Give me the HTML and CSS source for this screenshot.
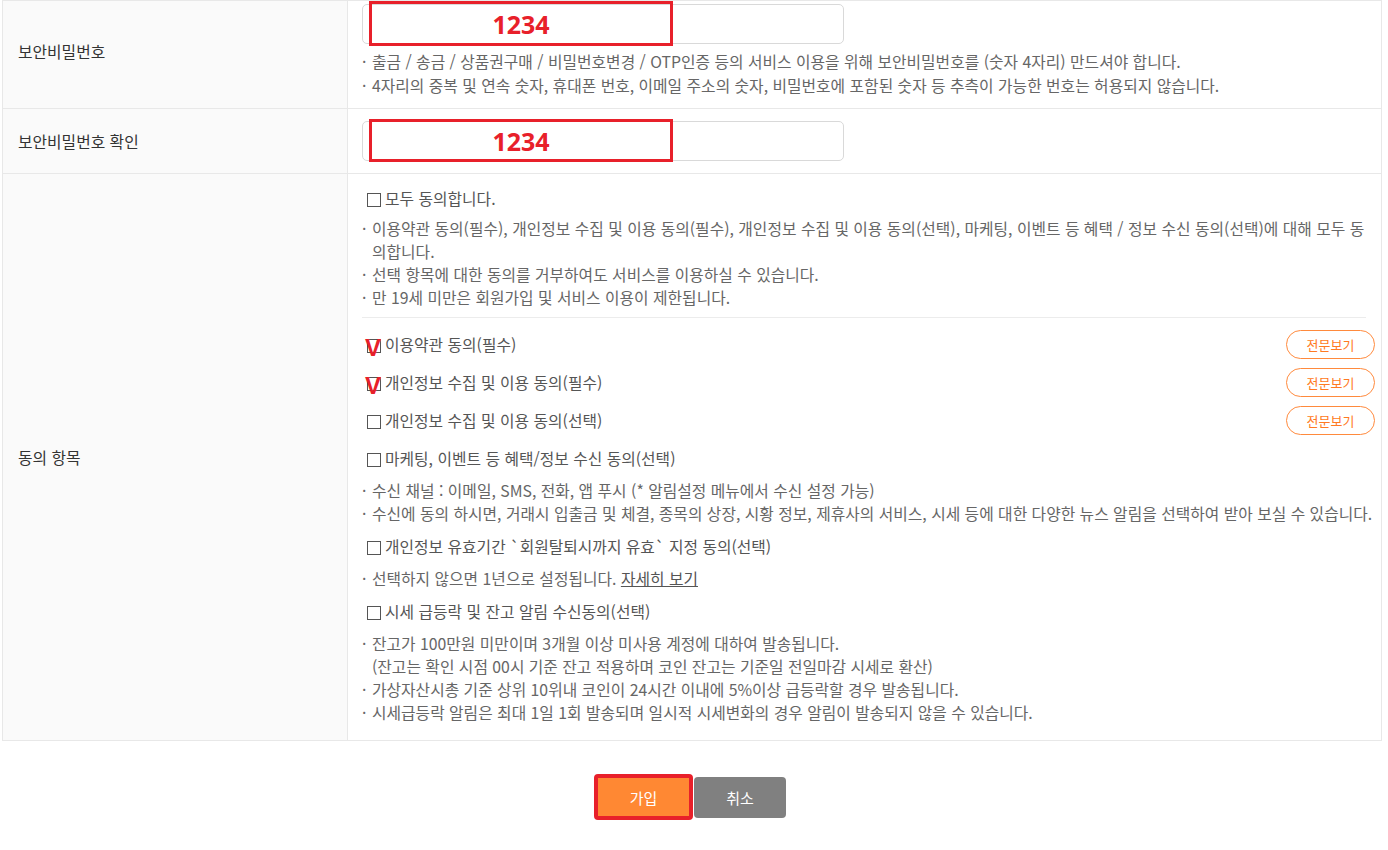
FILE: index.html
```html
<!DOCTYPE html>
<html lang="ko">
<head>
<meta charset="utf-8">
<title>회원가입</title>
<link rel="stylesheet" href="styles.css">
</head>
<body>
<div class="page">
  <div class="form">
    <div class="row row-first">
      <div class="label">보안비밀번호</div>
      <div class="field">
        <div class="input-wrap">
          <div class="input"></div>
          <div class="mark-box">1234</div>
        </div>
        <ul class="hints">
          <li>출금 / 송금 / 상품권구매 / 비밀번호변경 / OTP인증 등의 서비스 이용을 위해 보안비밀번호를 (숫자 4자리) 만드셔야 합니다.</li>
          <li>4자리의 중복 및 연속 숫자, 휴대폰 번호, 이메일 주소의 숫자, 비밀번호에 포함된 숫자 등 추측이 가능한 번호는 허용되지 않습니다.</li>
        </ul>
      </div>
    </div>
    <div class="row">
      <div class="label">보안비밀번호 확인</div>
      <div class="field">
        <div class="input-wrap">
          <div class="input"></div>
          <div class="mark-box mark-box-2">1234</div>
        </div>
      </div>
    </div>
    <div class="row">
      <div class="label">동의 항목</div>
      <div class="field field-agree">
        <div class="check-row check-all"><span class="cb"></span>모두 동의합니다.</div>
        <ul class="hints hints-agree">
          <li>이용약관 동의(필수), 개인정보 수집 및 이용 동의(필수), 개인정보 수집 및 이용 동의(선택), 마케팅, 이벤트 등 혜택 / 정보 수신 동의(선택)에 대해 모두 동<br>의합니다.</li>
          <li>선택 항목에 대한 동의를 거부하여도 서비스를 이용하실 수 있습니다.</li>
          <li>만 19세 미만은 회원가입 및 서비스 이용이 제한됩니다.</li>
        </ul>
        <div class="sep"></div>
        <div class="check-row"><span class="cb cb-checked"><span class="v-mark">V</span></span>이용약관 동의(필수)<button class="view-btn">전문보기</button></div>
        <div class="check-row"><span class="cb cb-checked"><span class="v-mark">V</span></span>개인정보 수집 및 이용 동의(필수)<button class="view-btn">전문보기</button></div>
        <div class="check-row"><span class="cb"></span>개인정보 수집 및 이용 동의(선택)<button class="view-btn">전문보기</button></div>
        <div class="check-row"><span class="cb"></span>마케팅, 이벤트 등 혜택/정보 수신 동의(선택)</div>
        <ul class="hints hints-sub">
          <li>수신 채널 : 이메일, SMS, 전화, 앱 푸시 (* 알림설정 메뉴에서 수신 설정 가능)</li>
          <li>수신에 동의 하시면, 거래시 입출금 및 체결, 종목의 상장, 시황 정보, 제휴사의 서비스, 시세 등에 대한 다양한 뉴스 알림을 선택하여 받아 보실 수 있습니다.</li>
        </ul>
        <div class="check-row"><span class="cb"></span>개인정보 유효기간 `회원탈퇴시까지 유효` 지정 동의(선택)</div>
        <ul class="hints hints-sub">
          <li>선택하지 않으면 1년으로 설정됩니다. <a class="more" href="#">자세히 보기</a></li>
        </ul>
        <div class="check-row"><span class="cb"></span>시세 급등락 및 잔고 알림 수신동의(선택)</div>
        <ul class="hints hints-sub">
          <li>잔고가 100만원 미만이며 3개월 이상 미사용 계정에 대하여 발송됩니다.<br>(잔고는 확인 시점 00시 기준 잔고 적용하며 코인 잔고는 기준일 전일마감 시세로 환산)</li>
          <li>가상자산시총 기준 상위 10위내 코인이 24시간 이내에 5%이상 급등락할 경우 발송됩니다.</li>
          <li>시세급등락 알림은 최대 1일 1회 발송되며 일시적 시세변화의 경우 알림이 발송되지 않을 수 있습니다.</li>
        </ul>
      </div>
    </div>
  </div>
  <div class="actions">
    <button class="btn btn-join">가입</button>
    <button class="btn btn-cancel">취소</button>
  </div>
</div>
</body>
</html>
```
FILE: styles.css
```css
* { box-sizing: border-box; }
html, body { margin: 0; padding: 0; background: #fff; }
body {
  font-family: "Noto Sans CJK KR", "Noto Sans", sans-serif;
  font-size: 15.8px;
  color: #333;
}
.page { padding-left: 2px; width: 1382px; }
.form {
  border-top: 1px solid #e8e8e8;
  border-left: 1px solid #e8e8e8;
  border-right: 1px solid #e8e8e8;
}
.row {
  display: grid;
  grid-template-columns: 345px 1fr;
  border-bottom: 1px solid #e8e8e8;
}
.label {
  background: #fafafa;
  border-right: 1px solid #e8e8e8;
  padding-left: 15px;
  display: flex;
  align-items: center;
  color: #333;
}
.row-first .label { padding-bottom: 6px; }
.field { padding: 12px 15px 12px 14px; }
.row-first .field { padding-top: 3px; padding-bottom: 10px; }
.input-wrap { position: relative; width: 482px; }
.input {
  height: 40px;
  border: 1px solid #d9d9d9;
  border-radius: 5px;
  background: #fff;
}
.mark-box {
  position: absolute;
  left: 7px;
  top: -3px;
  width: 304px;
  height: 45px;
  border: 3px solid #e8202a;
  color: #e8202a;
  font-family: "Noto Sans", "Open Sans", sans-serif;
  font-weight: 700;
  font-size: 25px;
  display: flex;
  align-items: center;
  justify-content: center;
}
.mark-box-2 { top: -2px; height: 43px; }
.hints { list-style: none; margin: 0; padding: 0; color: #666; line-height: 23px; }
.row-first .hints { margin-top: 6px; line-height: 24px; }
.hints li { position: relative; padding-left: 10px; white-space: nowrap; }
.hints li::before {
  content: "·";
  position: absolute;
  left: 0;
  top: 0;
}
.field-agree { padding: 5px 6px 14px 14px; }
.check-row {
  height: 38px;
  display: flex;
  align-items: center;
  color: #555;
  position: relative;
}
.cb {
  display: inline-block;
  position: relative;
  width: 14px;
  height: 14px;
  border: 1px solid #555;
  margin: 4px 4px 0 5px;
  background: #fff;
  flex: none;
}
.v-mark {
  position: absolute;
  left: -3px;
  top: -4px;
  color: #e8202a;
  font-family: "Liberation Sans", Arial, sans-serif;
  font-weight: 700;
  font-size: 24px;
  line-height: 24px;
}
.sep { height: 1px; background: #ececec; margin: 8px 9px 7px 0; }
.view-btn {
  margin-left: auto;
  width: 89px;
  height: 29px;
  border: 1px solid #ff8a3d;
  border-radius: 15px;
  background: #fff;
  color: #ff7a22;
  font-family: inherit;
  font-size: 13px;
  padding: 0;
}
.hints-sub { margin: 2px 0; }
.more { color: #555; text-decoration: underline; }
.actions {
  display: flex;
  justify-content: center;
  align-items: center;
  gap: 1px;
  margin-top: 33px;
  padding-right: 4px;
}
.btn {
  width: 92px;
  height: 41px;
  border: none;
  border-radius: 4px;
  color: #fff;
  font-family: inherit;
  font-size: 15px;
  padding: 0;
}
.btn-join {
  width: 99px;
  height: 46px;
  background: #ff8833;
  border: 4px solid #e8202a;
}
.btn-cancel { background: #808080; }
```
